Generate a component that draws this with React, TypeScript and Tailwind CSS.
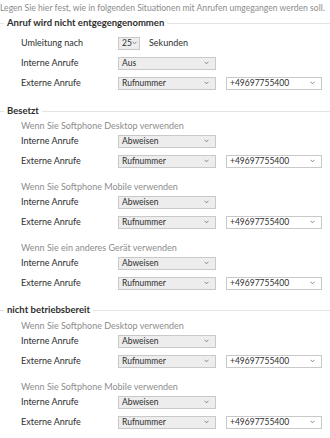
import React from 'react';

const Chevron = () => (
  <svg width="5" height="4" viewBox="0 0 5 4" className="shrink-0">
    <path d="M0.6 0.8 L2.5 2.8 L4.4 0.8" fill="none" stroke="#7a7a7a" strokeWidth="0.9" />
  </svg>
);

const Select: React.FC<{ value: string; className?: string; white?: boolean }> = ({ value, className = 'w-[98px]', white }) => (
  <div
    className={`flex h-[13px] items-center justify-between border border-[#c9c9c9] pl-[3px] pr-[6px] text-[8.5px] text-[#2e2e2e] ${
      white ? 'bg-white' : 'bg-[#ededed]'
    } ${className}`}
  >
    <span className="leading-none">{value}</span>
    <Chevron />
  </div>
);

const Legend: React.FC<{ title: string; className?: string }> = ({ title, className = '' }) => (
  <div className={`flex h-[14px] items-center ${className}`}>
    <span className="h-px w-[4px] bg-[#e4e4e4]" />
    <span className="px-[3px] text-[9.5px] font-bold text-[#2e2e2e]">{title}</span>
    <span className="h-px flex-1 bg-[#e4e4e4]" />
  </div>
);

const Row: React.FC<{ label: string; children: React.ReactNode }> = ({ label, children }) => (
  <div className="flex h-[20px] items-center pl-[21px]">
    <span className="w-[97px] shrink-0 text-[#2e2e2e]">{label}</span>
    {children}
  </div>
);

const Group: React.FC<{ title: string; className?: string }> = ({ title, className = '' }) => (
  <div className={className}>
    <div className="h-[11px] whitespace-nowrap pl-[21px] leading-[11px] text-[#8d8d8d]">{title}</div>
    <Row label="Interne Anrufe">
      <Select value="Abweisen" />
    </Row>
    <Row label="Externe Anrufe">
      <Select value="Rufnummer" />
      <Select value="+49697755400" white className="ml-[10px] w-[96px]" />
    </Row>
  </div>
);

export default function App() {
  return (
    <div className="h-[438px] w-[330px] overflow-hidden bg-white font-['Lato',sans-serif] text-[9px]">
      <p className="h-[16px] whitespace-nowrap text-[8.6px] leading-[16px] text-[#8c8c8c]">
        Legen Sie hier fest, wie in folgenden Situationen mit Anrufen umgegangen werden soll.
      </p>

      <Legend title="Anruf wird nicht entgegengenommen" />
      <div className="mt-[3px]">
        <Row label="Umleitung nach">
          <Select value="25" className="w-[22px] !pl-[3px] !pr-[3px]" />
          <span className="ml-[9px] text-[#2e2e2e]">Sekunden</span>
        </Row>
        <Row label="Interne Anrufe">
          <Select value="Aus" />
        </Row>
        <Row label="Externe Anrufe">
          <Select value="Rufnummer" />
          <Select value="+49697755400" white className="ml-[10px] w-[96px]" />
        </Row>
      </div>

      <Legend title="Besetzt" className="mt-[11px]" />
      <Group title="Wenn Sie Softphone Desktop verwenden" className="mt-[2px]" />
      <Group title="Wenn Sie Softphone Mobile verwenden" className="mt-[10px]" />
      <Group title="Wenn Sie ein anderes Gerät verwenden" className="mt-[10px]" />

      <Legend title="nicht betriebsbereit" className="mt-[10px]" />
      <Group title="Wenn Sie Softphone Desktop verwenden" className="mt-[3px]" />
      <Group title="Wenn Sie Softphone Mobile verwenden" className="mt-[10px]" />
    </div>
  );
}
